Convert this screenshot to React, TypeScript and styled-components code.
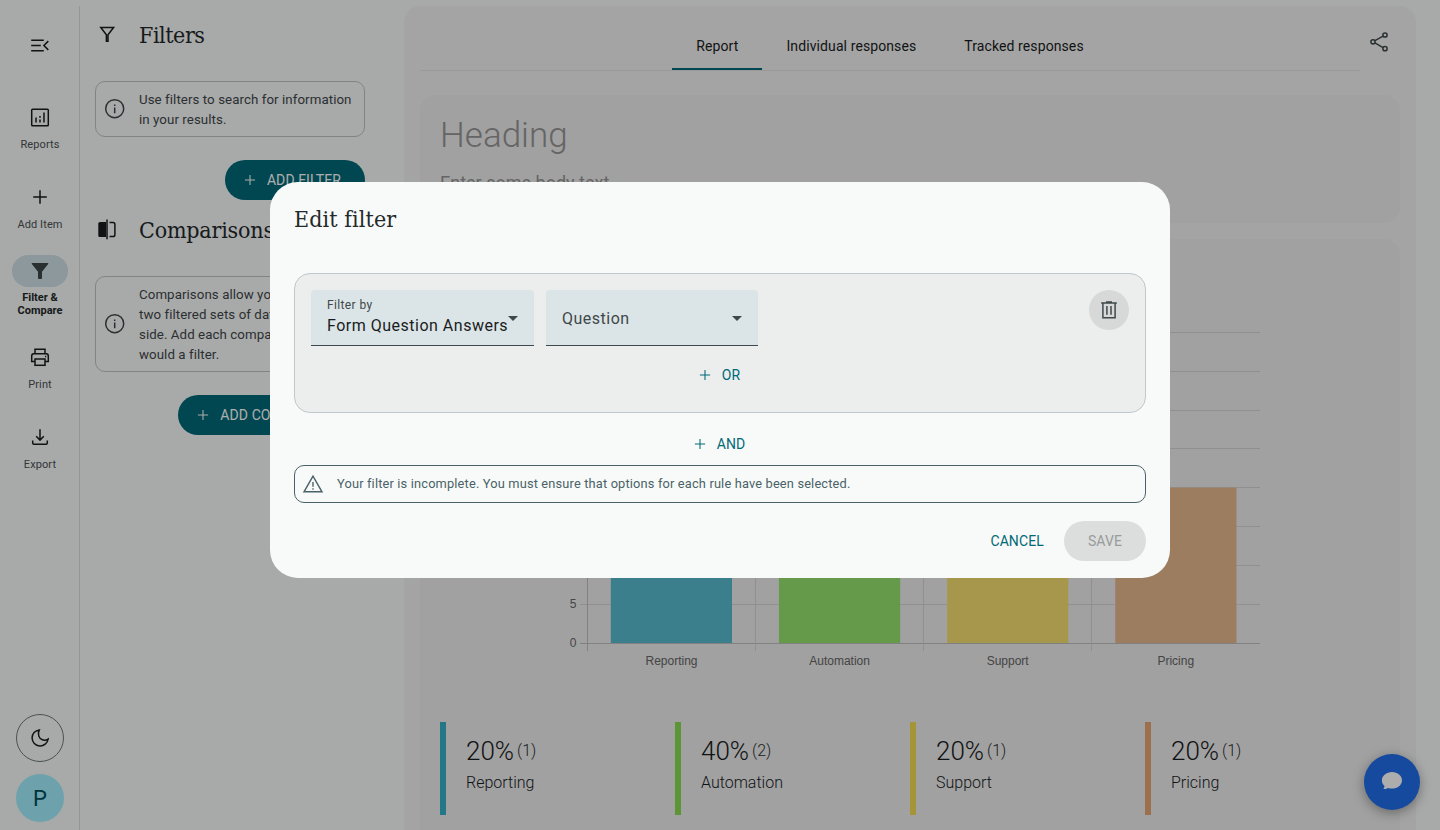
import React from 'react';
import styled, { createGlobalStyle } from 'styled-components';

const GlobalStyle = createGlobalStyle`
  *, *::before, *::after {
    box-sizing: border-box;
  }

  body {
    margin: 0;
    height: 830px;
    overflow: hidden;
    background: #f8faf9;
    color: #191c1d;
    font-family: Roboto, 'Liberation Sans', sans-serif;
  }

  svg {
    display: block;
    flex: none;
  }
`;

const SLAB = `'Roboto Slab', 'DejaVu Serif', serif`;
const PRIMARY = '#006978';

/* ---------- Icons ---------- */

interface IIconProps {
  size?: number;
}

interface IGlyphProps extends IIconProps {
  width?: number;
  children: React.ReactNode;
}

const Glyph: React.FC<IGlyphProps> = ({ size = 24, width = 1.3, children }) => (
  <svg
    width={size}
    height={size}
    viewBox='0 0 24 24'
    fill='none'
    stroke='currentColor'
    strokeWidth={width}
    aria-hidden='true'
  >
    {children}
  </svg>
);

const MenuOpenIcon = () => (
  <Glyph width={1.5}>
    <path d='M3.2 7.2h12.6M3.2 12.5h9.6M3.2 17.8h12.6M20.3 8.1l-4.4 4.4 4.4 4.4' />
  </Glyph>
);

const ReportsIcon = () => (
  <Glyph width={1.5}>
    <rect x='3.7' y='4.2' width='16.6' height='16.6' rx='0.9' />
    <path d='M8 12.5v5M12 14.5v3M16 7.5v10M12 11v1.8' />
  </Glyph>
);

const PlusIcon: React.FC<IIconProps & { width?: number }> = ({
  size,
  width = 1.4,
}) => (
  <Glyph size={size} width={width}>
    <path d='M12 5.2v13.6M5.2 12h13.6' />
  </Glyph>
);

const FilterFilledIcon = () => (
  <Glyph>
    <path
      d='M4.3 4h15.4c.5 0 .8.6.5 1L14 12.8v6.3c0 .6-.4.9-.9.9h-2.2c-.5 0-.9-.3-.9-.9v-6.3L3.8 5c-.3-.4 0-1 .5-1Z'
      fill='currentColor'
      stroke='none'
    />
  </Glyph>
);

const FilterIcon = () => (
  <Glyph width={1.5}>
    <path d='M5.8 4.5h12.8L13 11.7v6.6h-1.6v-6.6Z' />
  </Glyph>
);

const PrintIcon = () => (
  <Glyph width={1.5}>
    <path d='M7 8V4.2h10V8M7 16.5H3.7V11c0-1.5.7-2.3 2-2.3h12.6c1.3 0 2 .8 2 2.3v5.5H17' />
    <rect x='7' y='14' width='10' height='6.3' />
    <path d='M17 11.5h1.3' />
  </Glyph>
);

const ExportIcon = () => (
  <Glyph width={1.5}>
    <path d='M12 4.3v10.5M8.2 11.3l3.8 3.8 3.8-3.8M4.7 15.6v2.5c0 .7.4 1.2 1.2 1.2h12.2c.8 0 1.2-.5 1.2-1.2v-2.5' />
  </Glyph>
);

const MoonIcon = () => (
  <Glyph width={1.5}>
    <path d='M11.3 3.9a8.05 8.05 0 1 0 8.8 9.2c-3.9 2.4-8.2.5-9.3-3-.7-2.2-.4-4.3.5-6.2Z' />
  </Glyph>
);

const CompareIcon = () => (
  <Glyph width={1.5}>
    <path
      d='M11 3.9v15.2H5c-.9 0-1.7-.8-1.7-1.7V5.6c0-.9.8-1.7 1.7-1.7Z'
      fill='currentColor'
      stroke='none'
    />
    <path d='M12 1.4v19.8M14.5 4.5H18c1.2 0 1.9.7 1.9 1.8v10.4c0 1.1-.7 1.8-1.9 1.8h-3.5' />
  </Glyph>
);

const InfoIcon = () => (
  <Glyph width={1.5}>
    <circle cx='11.7' cy='11.7' r='9' />
    <path d='M11.7 10.5v5.7M11.7 7.4v1.6' />
  </Glyph>
);

const ShareIcon = () => (
  <Glyph width={1.5}>
    <circle cx='18' cy='5' r='2.1' />
    <circle cx='6' cy='11.8' r='2.1' />
    <circle cx='18' cy='18.7' r='2.1' />
    <path d='m7.9 10.7 8.2-4.6M7.9 12.9l8.2 4.7' />
  </Glyph>
);

const TrashIcon = () => (
  <Glyph width={1.5}>
    <path d='M4.2 5h15.6M9 4h6M5.9 5.5v14.3h12.2V5.5M9.9 8v8.7M14 8v8.7' />
  </Glyph>
);

const WarningIcon = () => (
  <Glyph width={1.4}>
    <path d='M12 4.2 3 19.8h18Z' />
    <path d='M12 10v4.8M12 16.3v1.5' />
  </Glyph>
);

/* ---------- Navigation rail ---------- */

const Page = styled.div`
  display: flex;
  height: 830px;
`;

const Rail = styled.nav`
  width: 80px;
  height: 824px;
  margin-top: 6px;
  padding: 23px 0 8px;
  display: flex;
  flex-direction: column;
  align-items: center;
  border-right: 1px solid #dbdddd;
`;

const RailToggle = styled.div`
  height: 71px;
  padding-top: 4px;
`;

const RailItem = styled.div<{ $active?: boolean }>`
  width: 79px;
  height: 80px;
  display: flex;
  flex-direction: column;
  align-items: center;
  color: ${(p) => (p.$active ? '#3f484a' : '#191c1d')};
  margin-left: 1px;
`;

const RailPill = styled.div<{ $active?: boolean }>`
  width: 56px;
  height: 32px;
  margin-top: ${(p) => (p.$active ? '-5px' : '1px')};
  border-radius: 16px;
  display: flex;
  align-items: center;
  justify-content: center;
  background: ${(p) => (p.$active ? '#d0e0e6' : 'transparent')};
`;

const RailLabel = styled.div<{ $active?: boolean }>`
  margin-top: ${(p) => (p.$active ? '4px' : '5px')};
  font-size: 11px;
  line-height: 13px;
  letter-spacing: ${(p) => (p.$active ? '0' : '0.1px')};
  font-weight: ${(p) => (p.$active ? 700 : 400)};
  color: ${(p) => (p.$active ? '#24292a' : '#4a5153')};
  text-align: center;
`;

const RailFooter = styled.div`
  margin-top: auto;
  margin-left: 1px;
  display: flex;
  flex-direction: column;
  gap: 12px;
`;

const RoundButton = styled.div<{ $avatar?: boolean }>`
  width: 48px;
  height: 48px;
  border-radius: 50%;
  display: flex;
  align-items: center;
  justify-content: center;
  border: ${(p) => (p.$avatar ? 'none' : '1px solid #6f797b')};
  background: ${(p) => (p.$avatar ? '#a1eefe' : 'transparent')};
  color: ${(p) => (p.$avatar ? '#004d58' : '#191c1d')};
  font-size: 22px;
`;

const RAIL_ITEMS = [
  { label: 'Reports', icon: <ReportsIcon /> },
  { label: 'Add Item', icon: <PlusIcon width={1.5} /> },
  { label: 'Filter & Compare', icon: <FilterFilledIcon />, active: true },
  { label: 'Print', icon: <PrintIcon /> },
  { label: 'Export', icon: <ExportIcon /> },
];

/* ---------- Filter side panel ---------- */

const SidePanel = styled.aside`
  width: 324px;
  padding: 15px 39px 0 15px;
`;

const PanelHeader = styled.div`
  height: 40px;
  display: flex;
  align-items: center;
  gap: 20px;
`;

const PanelTitle = styled.h2<{ $spacing?: number }>`
  margin: 0;
  font-family: ${SLAB};
  font-size: 23px;
  font-weight: 300;
  font-stretch: condensed;
  line-height: 32px;
  letter-spacing: ${(p) => p.$spacing ?? -0.2}px;
  white-space: nowrap;
  color: #24292a;
`;

const InfoBox = styled.div`
  margin-top: 26px;
  padding: 7px;
  display: flex;
  align-items: center;
  gap: 12px;
  border: 1px solid #bec3c4;
  border-radius: 10px;
  color: #3f484a;
`;

const InfoText = styled.p`
  margin: 1px 0 -1px;
  font-size: 13.3px;
  line-height: 20px;
  letter-spacing: 0.07px;
  white-space: pre;
`;

const PanelActions = styled.div`
  margin: 23px 0 10px;
  display: flex;
  justify-content: flex-end;
`;

const ButtonIcon = styled.span`
  margin: 0 8px 0 -8px;
`;

const Button = styled.button<{ $variant?: 'filled' | 'text' | 'disabled' }>`
  height: 40px;
  padding: 0 ${(p) => (p.$variant === 'text' ? '12px' : '24px')};
  display: flex;
  align-items: center;
  border: none;
  border-radius: 20px;
  font-family: inherit;
  font-size: 14px;
  font-weight: 400;
  letter-spacing: 0.1px;
  white-space: nowrap;
  background: ${(p) =>
    p.$variant === 'filled'
      ? PRIMARY
      : p.$variant === 'disabled'
        ? '#dcdedd'
        : 'transparent'};
  color: ${(p) =>
    p.$variant === 'filled'
      ? '#ffffff'
      : p.$variant === 'disabled'
        ? '#989b9b'
        : PRIMARY};

  ${ButtonIcon} {
    margin-left: ${(p) => (p.$variant === 'text' ? '-4px' : '-8px')};
  }
`;

/* ---------- Report ---------- */

const Report = styled.main`
  width: 1012px;
  height: 824px;
  margin-top: 6px;
  padding: 0 16px;
  border-radius: 16px 16px 0 0;
  background: #f2f2f2;
`;

const TopBar = styled.div`
  height: 65px;
  display: flex;
`;

const Tabs = styled.div`
  width: 940px;
  display: flex;
  justify-content: center;
  align-items: flex-end;
  border-bottom: 1px solid #e0e2e2;
`;

const Tab = styled.div<{ $active?: boolean }>`
  height: 48px;
  padding: 0 24px;
  line-height: 48px;
  font-size: 14px;
  letter-spacing: 0.1px;
  border-bottom: ${(p) => (p.$active ? `2px solid ${PRIMARY}` : 'none')};
`;

const ShareButton = styled.div`
  padding: 24px 0 0 7px;
  color: #3f484a;
`;

const Card = styled.section<{ $height: number; $top: number; $cut?: boolean }>`
  height: ${(p) => p.$height}px;
  margin-top: ${(p) => p.$top}px;
  padding: 20px;
  border-radius: ${(p) => (p.$cut ? '16px 16px 0 0' : '16px')};
  background: #ededed;
  overflow: hidden;
`;

const CardHeading = styled.h1`
  margin: 1px 0 0;
  font-size: 35px;
  line-height: 40px;
  font-weight: 300;
  color: #969696;
`;

const CardBody = styled.p`
  margin: 15px 0 0;
  font-size: 18px;
  line-height: 24px;
  color: #969696;
`;

const ChartArea = styled.div`
  height: 463px;
`;

const Stats = styled.div`
  display: grid;
  grid-template-columns: repeat(4, 235px);
`;

const Stat = styled.div<{ $color: string }>`
  height: 93px;
  padding: 12px 0 0 20px;
  border-left: 6px solid ${(p) => p.$color};
  font-weight: 300;
`;

const StatValue = styled.div`
  height: 34px;
  display: flex;
  align-items: center;
  gap: 3px;
  font-size: 26px;
  line-height: 34px;
`;

const StatCount = styled.span`
  font-size: 16px;
  line-height: 34px;
  color: #2b3031;
`;

const StatLabel = styled.div`
  margin-top: 3px;
  font-size: 16px;
  line-height: 24px;
`;

const DATA = [
  { label: 'Reporting', percent: 20, count: 1, bar: '#57bbcf', mark: '#35b0c6' },
  { label: 'Automation', percent: 40, count: 2, bar: '#96e46f', mark: '#86dc4e' },
  { label: 'Support', percent: 20, count: 1, bar: '#f6df72', mark: '#f5db55' },
  { label: 'Pricing', percent: 20, count: 1, bar: '#e7b88e', mark: '#e6a670' },
];

const Chart: React.FC = () => (
  <svg width='840' height='463' viewBox='0 0 840 463'>
    {[0, 1, 2, 3, 4, 5, 6, 7, 8].map((i) => (
      <rect
        key={i}
        x='140'
        y={384 - Math.round(i * 38.9)}
        width='680'
        height='1'
        fill={i === 0 ? '#bfbfbf' : '#d5d5d5'}
      />
    ))}
    {[0, 5].map((tick) => (
      <text
        key={tick}
        x='136.5'
        y={388 - tick * 7.8}
        textAnchor='end'
        fontFamily='Liberation Sans, sans-serif'
        fontSize='12'
        fill='#666666'
      >
        {tick}
      </text>
    ))}
    {DATA.map(({ label, percent, bar }, i) => {
      const height = percent * 7.77;
      return (
        <g key={label}>
          <rect
            x={147 + i * 168}
            y='30'
            width='1'
            height='362'
            fill={i === 0 ? '#bfbfbf' : '#d5d5d5'}
          />
          <rect
            x={170.8 + i * 168.15}
            y={384 - height}
            width='121.2'
            height={height}
            fill={bar}
          />
          <text
            x={231.5 + i * 168.1}
            y='406'
            textAnchor='middle'
            fontFamily='Liberation Sans, sans-serif'
            fontSize='12'
            fill='#666666'
          >
            {label}
          </text>
        </g>
      );
    })}
  </svg>
);

/* ---------- Chat launcher and dialog ---------- */

const ChatLauncher = styled.div`
  position: fixed;
  right: 20px;
  bottom: 20px;
  width: 56px;
  height: 56px;
  border-radius: 50%;
  background: #1f6eeb;
  color: #ffffff;
  display: flex;
  align-items: center;
  justify-content: center;
  box-shadow: 0 3px 12px rgba(0, 0, 0, 0.35);
`;

const Backdrop = styled.div`
  position: fixed;
  inset: 0;
  padding: 182px 270px 0;
  background: rgba(0, 0, 0, 0.32);
`;

const Dialog = styled.div`
  height: 396px;
  padding: 21px 24px 17px;
  display: flex;
  flex-direction: column;
  border-radius: 28px;
  background: #f8faf9;
`;

const RuleGroup = styled.div`
  height: 140px;
  margin-top: 38px;
  padding: 16px;
  border: 1px solid #bfc8ca;
  border-radius: 16px;
  background: #eceeed;
`;

const RuleRow = styled.div`
  display: flex;
  gap: 12px;
`;

const Select = styled.div<{ $width: number }>`
  width: ${(p) => p.$width}px;
  height: 56px;
  padding: 0 16px;
  display: flex;
  align-items: center;
  justify-content: space-between;
  border-radius: 4px 4px 0 0;
  border-bottom: 1px solid #3f484a;
  background: #dbe4e6;
  white-space: nowrap;
`;

const SelectText = styled.div`
  min-width: 0;
  font-size: 16px;
  line-height: 24px;
  letter-spacing: 0.5px;
`;

const SelectLabel = styled.div<{ $floating?: boolean }>`
  margin-top: ${(p) => (p.$floating ? 0 : 2)}px;
  font-size: ${(p) => (p.$floating ? 12 : 16)}px;
  line-height: ${(p) => (p.$floating ? 17 : 24)}px;
  letter-spacing: ${(p) => (p.$floating ? 0.37 : 0.5)}px;
  color: #3f484a;
`;

const Caret = styled.span`
  flex: none;
  margin-top: 2px;
  border: 5px solid transparent;
  border-top-color: #3f484a;
  border-bottom: none;
`;

const DeleteButton = styled.div`
  width: 40px;
  height: 40px;
  margin-left: auto;
  display: flex;
  align-items: center;
  justify-content: center;
  border-radius: 50%;
  background: #d7d9d8;
  color: #3f484a;
`;

const Centered = styled.div<{ $top: number }>`
  margin-top: ${(p) => p.$top}px;
  display: flex;
  justify-content: center;
`;

const Alert = styled.div`
  height: 38px;
  margin-top: 1px;
  padding: 0 6px;
  display: flex;
  align-items: center;
  gap: 12px;
  border: 1px solid #4a6267;
  border-radius: 10px;
  color: #4a6267;
`;

const AlertText = styled.p`
  margin: 0;
  font-size: 12.8px;
  letter-spacing: 0.17px;
  line-height: 20px;
`;

const DialogActions = styled.div`
  margin-top: auto;
  display: flex;
  justify-content: flex-end;
  gap: 8px;
`;

const App: React.FC = () => (
  <>
    <GlobalStyle />
    <Page>
      <Rail>
        <RailToggle>
          <MenuOpenIcon />
        </RailToggle>
        {RAIL_ITEMS.map(({ label, icon, active }) => (
          <RailItem key={label} $active={active}>
            <RailPill $active={active}>{icon}</RailPill>
            <RailLabel $active={active}>{label}</RailLabel>
          </RailItem>
        ))}
        <RailFooter>
          <RoundButton>
            <MoonIcon />
          </RoundButton>
          <RoundButton $avatar>P</RoundButton>
        </RailFooter>
      </Rail>

      <SidePanel>
        <PanelHeader>
          <FilterIcon />
          <PanelTitle $spacing={-0.45}>Filters</PanelTitle>
        </PanelHeader>
        <InfoBox>
          <InfoIcon />
          <InfoText>{'Use filters to search for information\nin your results.'}</InfoText>
        </InfoBox>
        <PanelActions>
          <Button $variant='filled'>
            <ButtonIcon>
              <PlusIcon size={18} />
            </ButtonIcon>
            ADD FILTER
          </Button>
        </PanelActions>
        <PanelHeader>
          <CompareIcon />
          <PanelTitle>Comparisons</PanelTitle>
        </PanelHeader>
        <InfoBox>
          <InfoIcon />
          <InfoText>
            {
              'Comparisons allow you to view\ntwo filtered sets of data side by\nside. Add each comparison as you\nwould a filter.'
            }
          </InfoText>
        </InfoBox>
        <PanelActions>
          <Button $variant='filled'>
            <ButtonIcon>
              <PlusIcon size={18} />
            </ButtonIcon>
            ADD COMPARISON
          </Button>
        </PanelActions>
      </SidePanel>

      <Report>
        <TopBar>
          <Tabs>
            <Tab $active>Report</Tab>
            <Tab>Individual responses</Tab>
            <Tab>Tracked responses</Tab>
          </Tabs>
          <ShareButton>
            <ShareIcon />
          </ShareButton>
        </TopBar>
        <Card $height={128} $top={24}>
          <CardHeading>Heading</CardHeading>
          <CardBody>Enter some body text</CardBody>
        </Card>
        <Card $height={591} $top={16} $cut>
          <ChartArea>
            <Chart />
          </ChartArea>
          <Stats>
            {DATA.map(({ label, percent, count, mark }) => (
              <Stat key={label} $color={mark}>
                <StatValue>
                  {percent}%<StatCount>({count})</StatCount>
                </StatValue>
                <StatLabel>{label}</StatLabel>
              </Stat>
            ))}
          </Stats>
        </Card>
      </Report>
    </Page>

    <ChatLauncher>
      <svg width='24' height='24' viewBox='0 0 24 24' fill='currentColor'>
        <path d='M12 2c5.6 0 10 3.7 10 8.3s-4.4 8.3-10 8.3c-1.5 0-2.8-.2-4-.7-1.4.9-3 1.3-4.7 1.2.8-.9 1.2-1.9 1.2-3C2.8 14.6 1.9 12.5 1.9 10.3 1.9 5.7 6.4 2 12 2Z' />
      </svg>
    </ChatLauncher>

    <Backdrop>
      <Dialog>
        <PanelTitle $spacing={0.1}>Edit filter</PanelTitle>
        <RuleGroup>
          <RuleRow>
            <Select $width={223}>
              <SelectText>
                <SelectLabel $floating>Filter by</SelectLabel>
                Form Question Answers
              </SelectText>
              <Caret />
            </Select>
            <Select $width={212}>
              <SelectLabel>Question</SelectLabel>
              <Caret />
            </Select>
            <DeleteButton>
              <TrashIcon />
            </DeleteButton>
          </RuleRow>
          <Centered $top={9}>
            <Button $variant='text'>
              <ButtonIcon>
                <PlusIcon size={18} />
              </ButtonIcon>
              OR
            </Button>
          </Centered>
        </RuleGroup>
        <Centered $top={11}>
          <Button $variant='text'>
            <ButtonIcon>
              <PlusIcon size={18} />
            </ButtonIcon>
            AND
          </Button>
        </Centered>
        <Alert>
          <WarningIcon />
          <AlertText>
            Your filter is incomplete. You must ensure that options for each rule have been selected.
          </AlertText>
        </Alert>
        <DialogActions>
          <Button $variant='text'>CANCEL</Button>
          <Button $variant='disabled'>SAVE</Button>
        </DialogActions>
      </Dialog>
    </Backdrop>
  </>
);

export default App;
